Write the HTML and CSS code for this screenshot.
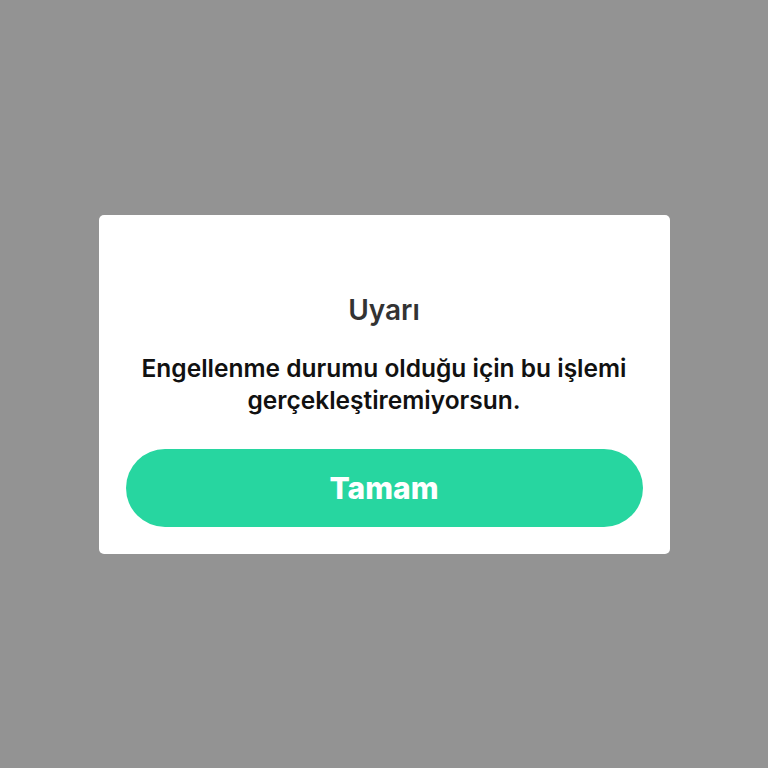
FILE: index.html
```html
<!DOCTYPE html>
<html lang="tr">
<head>
<meta charset="utf-8">
<link rel="stylesheet" href="styles.css">
</head>
<body>
<div class="screen">
  <div class="dialog">
    <div class="title">Uyarı</div>
    <div class="message">Engellenme durumu olduğu için bu işlemi gerçekleştiremiyorsun.</div>
    <button class="btn">Tamam</button>
  </div>
</div>
</body>
</html>
```

FILE: styles.css
```css
html, body {
  margin: 0;
  padding: 0;
}
body {
  background: #939393;
  font-family: Inter, "Noto Sans", sans-serif;
}
.screen {
  width: 768px;
  height: 768px;
  display: flex;
  align-items: center;
  justify-content: center;
}
.dialog {
  width: 571px;
  height: 339px;
  box-sizing: border-box;
  background: #ffffff;
  border-radius: 5px;
  padding: 78px 27px 27px;
  display: flex;
  flex-direction: column;
  align-items: center;
}
.title {
  font-size: 28px;
  font-weight: 600;
  color: #333333;
  line-height: 34px;
}
.message {
  margin-top: 25px;
  font-size: 24.5px;
  font-weight: 600;
  color: #111111;
  line-height: 32px;
  text-align: center;
  width: 517px;
}
.btn {
  margin-top: 33px;
  width: 517px;
  height: 78px;
  flex-shrink: 0;
  border: none;
  border-radius: 39px;
  background: #27d6a0;
  color: #ffffff;
  font-family: Inter, "Noto Sans", sans-serif;
  font-size: 30px;
  font-weight: 800;
  padding: 0;
}
```
